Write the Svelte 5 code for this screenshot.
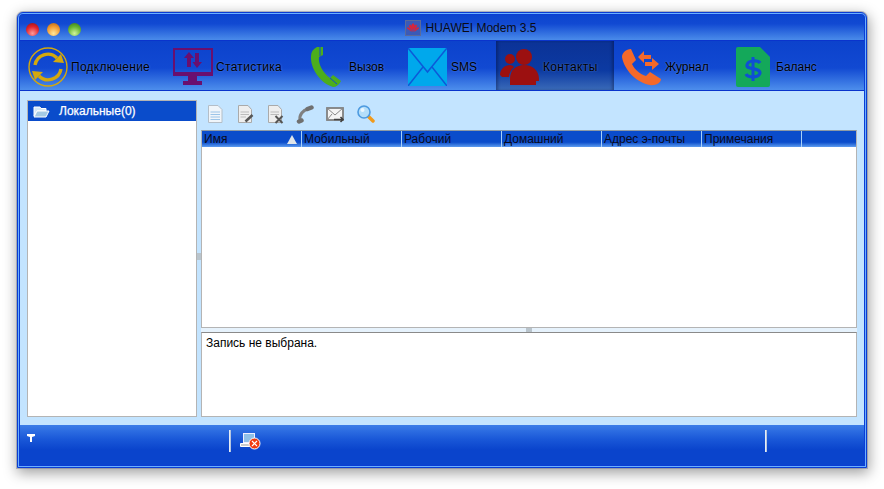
<script>
  const tools = [
    { id: 'connect', label: 'Подключение', pad: 8, width: 145, gap: 3, track: 0.27 },
    { id: 'stats', label: 'Статистика', pad: 8, width: 131, gap: 3, track: 0.3 },
    { id: 'call', label: 'Вызов', pad: 14, width: 98, gap: 7, track: 0 },
    { id: 'sms', label: 'SMS', pad: 14, width: 102, gap: 4, track: 0 },
    { id: 'contacts', label: 'Контакты', pad: 4, width: 118, gap: 3, track: 0.35, active: true },
    { id: 'log', label: 'Журнал', pad: 8, width: 114, gap: 3, track: 0 },
    { id: 'balance', label: 'Баланс', pad: 8, width: 120, gap: 6, track: 0 }
  ]
  const columns = ['Имя', 'Мобильный', 'Рабочий', 'Домашний', 'Адрес э-почты', 'Примечания']
</script>

<style>
  :global(body) { background: #fff; }
  .page { padding: 12px 17px 21px; font-family: "Liberation Sans", Arial, sans-serif; }
  .window {
    width: 850px;
    height: 456px;
    box-sizing: border-box;
    border: 1px solid #0a3cd4;
    padding: 2px;
    border-radius: 6px 6px 0 0;
    background: #c3e4ff;
    display: flex;
    flex-direction: column;
    box-shadow: inset 0 0 0 1px #6ab0ff, inset 0 0 0 2px #0a3cd4, 0 0 0 1px rgba(110, 120, 140, .45), 1px 4px 14px 1px rgba(0, 0, 0, .38);
  }
  .titlebar {
    height: 24px;
    padding: 1px 0 0 57px;
    flex: none;
    position: relative;
    display: flex;
    align-items: center;
    justify-content: center;
    background: linear-gradient(#0c45cf 0%, #1149d2 35%, #4a8bea 100%);
    border-bottom: 1px solid #0a34cc;
    font-size: 12px;
    color: #0a0a14;
    gap: 5px;
  }
  .lights { position: absolute; left: 6px; top: 8px; display: flex; gap: 8px; }
  .light { width: 13px; height: 13px; border-radius: 50%; }
  .red { background: radial-gradient(circle at 50% 80%, #ff9a9a, #e0232a 55%, #8c1016); }
  .orange { background: radial-gradient(circle at 50% 80%, #ffe89a, #f29a30 55%, #a8601a); }
  .green { background: radial-gradient(circle at 50% 80%, #d0f49a, #64b430 55%, #37701a); }
  .toolbar {
    height: 49px;
    flex: none;
    display: flex;
    background: linear-gradient(#0c42cc 0%, #1149d2 55%, #4d8eec 100%);
    border-bottom: 1px solid #0a34cc;
  }
  .tool {
    box-sizing: border-box;
    display: flex;
    align-items: center;
    flex: none;
    padding-top: 2px;
    font-size: 12px;
    color: #000;
    text-shadow: 0 0 2px rgba(180, 210, 255, .45);
  }
  .tool.active {
    background: linear-gradient(#0b3296 0%, #0c3aa2 60%, #3a6ab8 100%);
    box-shadow: inset 3px 0 3px -1px rgba(0, 0, 30, .28), inset -3px 0 3px -1px rgba(0, 0, 30, .28);
  }
  .tool svg { display: block; flex: none; }
  .content { flex: 1; min-height: 0; display: flex; padding: 9px 7px 8px 7px; }
  .tree {
    width: 170px;
    flex: none;
    box-sizing: border-box;
    background: #fff;
    border: 1px solid #b4b4b4;
  }
  .tree-row {
    height: 20px;
    background: #0a4ccb;
    color: #fff;
    font-size: 12px;
    -webkit-text-stroke: .25px #fff;
    display: flex;
    align-items: center;
    gap: 9px;
    padding-left: 5px;
  }
  .vsplit { width: 4px; flex: none; display: flex; align-items: center; }
  .grip-v { width: 4px; height: 7px; background: #b9c4cc; margin-bottom: 4px; }
  .main { flex: 1; min-width: 0; display: flex; flex-direction: column; }
  .icons { height: 30px; flex: none; display: flex; align-items: center; gap: 10px; padding: 0 0 2px 4px; box-sizing: border-box; }
  .icons svg { display: block; }
  .table {
    height: 198px;
    flex: none;
    box-sizing: border-box;
    background: #fff;
    border: 1px solid #b4b4b4;
    border-top-color: #8d9aa5;
  }
  .thead {
    height: 16px;
    display: flex;
    background: linear-gradient(#0a4ccb 0%, #0a4ccb 70%, #5d9cf0 100%);
    font-size: 12px;
    color: #0a0a20;
  }
  .th {
    width: 100px;
    box-sizing: border-box;
    padding-left: 2px;
    line-height: 16px;
    border-right: 1px solid #a8d0f8;
    position: relative;
    white-space: nowrap;
  }
  .sort {
    position: absolute;
    right: 4px;
    top: 4px;
    width: 0;
    height: 0;
    border-left: 5px solid transparent;
    border-right: 5px solid transparent;
    border-bottom: 9px solid #dfe5ea;
  }
  .hsplit { height: 4px; flex: none; display: flex; justify-content: center; background: #e6f2fc; }
  .grip-h { width: 6px; height: 4px; background: #b9c4cc; }
  .details {
    flex: 1;
    box-sizing: border-box;
    background: #fff;
    border: 1px solid #b4b4b4;
    border-top-color: #8a8a8a;
    font-size: 12px;
    color: #000;
    padding: 3px 4px;
    line-height: 15px;
  }
  .statusbar {
    height: 40px;
    flex: none;
    display: flex;
    background: linear-gradient(#3a7ce8 0%, #1a58d8 35%, #0a44cc 62%, #0a44cc 100%);
  }
  .cell { display: flex; box-sizing: border-box; align-items: flex-start; }
  .cell.signal { width: 209px; padding: 9px 0 0 7px; }
  .cell.net { width: 534px; padding: 8px 0 0 9px; }
  .sep { width: 2px; height: 22px; margin-top: 5px; background: linear-gradient(90deg, #fff, #9db4d8); flex: none; }
</style>

<div class="page">
  <div class="window">
    <div class="titlebar">
      <div class="lights">
        <span class="light red"></span><span class="light orange"></span><span class="light green"></span>
      </div>
      <svg width="16" height="16" viewBox="0 0 16 16">
        <rect x=".5" y=".5" width="15" height="15" fill="#3a5ab8" stroke="#5a6a9a"/>
        <g fill="#d8243a">
          <path d="M8 12 L6.4 5 L8 3 L9.6 5Z"/>
          <path d="M7.5 12 L3.8 6 L5 4.4 L6.8 6Z"/>
          <path d="M8.5 12 L12.2 6 L11 4.4 L9.2 6Z"/>
          <path d="M7 12 L2 8.6 L2.6 7 L5 8.4Z"/>
          <path d="M9 12 L14 8.6 L13.4 7 L11 8.4Z"/>
        </g>
      </svg>
      <span>HUAWEI Modem 3.5</span>
    </div>

    <div class="toolbar">
      {#each tools as t (t.id)}
        <div class="tool" class:active={t.active} style={`width:${t.width}px;padding-left:${t.pad}px;gap:${t.gap}px;letter-spacing:${t.track}px`}>
          {#if t.id === 'connect'}
            <svg width="40" height="40" viewBox="0 0 40 40">
              <circle cx="20" cy="20" r="19" fill="none" stroke="#d4a80c" stroke-width="1.4"/>
              <path d="M7 18 A13 13 0 0 1 29 11" fill="none" stroke="#d4a80c" stroke-width="3.4"/>
              <path d="M25 15 L36 16 L33 7Z" fill="#d4a80c"/>
              <path d="M33 22 A13 13 0 0 1 11 29" fill="none" stroke="#d4a80c" stroke-width="3.4"/>
              <path d="M15 25 L4 24 L7 33Z" fill="#d4a80c"/>
            </svg>
          {:else if t.id === 'stats'}
            <svg width="40" height="38" viewBox="0 0 40 38">
              <path fill="#6a0f6e" fill-rule="evenodd" d="M0 0H40V28H24V33H29V37H10V33H15V28H0ZM2 2V24H38V2Z"/>
              <path fill="#6a0f6e" d="M14 19V10H11L16 4L21 10H18V19Z M22 5H26V14H29L24 20L19.500 14H22Z"/>
            </svg>
          {:else if t.id === 'call'}
            <svg width="32" height="40" viewBox="0 0 32 40">
              <path fill="#4cae1c" d="M7 0 L13 0 L13 8 L9 10 C8 17 13 26 20 31 L23 28 L31 34 C29 38 26 40 23 40 C10 36 0 21 1 9 C1 5 3 2 7 0Z"/>
              <path stroke="#1149d2" stroke-width="1" d="M10 0V9 M20 31L27 37" fill="none"/>
            </svg>
          {:else if t.id === 'sms'}
            <svg width="39" height="38" viewBox="0 0 39 38">
              <rect width="39" height="38" fill="#00a8ec"/>
              <path d="M0 0L19.500 24L39 0M0 38L15 19M39 38L24 19" fill="none" stroke="#0c5ad8" stroke-width="1.500"/>
            </svg>
          {:else if t.id === 'contacts'}
            <svg width="40" height="38" viewBox="0 0 40 38">
              <g fill="#9c1010">
                <circle cx="10" cy="11" r="5"/>
                <path d="M0 27C0 21 5 17 10 17C12 17 13 18 14 19C11 22 9 25 9 29H2Z"/>
                <circle cx="24" cy="9" r="8"/>
                <path d="M10 37V31C10 22 16 17 24 17C33 17 39 23 39 31V33H36V37Z"/>
              </g>
            </svg>
          {:else if t.id === 'log'}
            <svg width="40" height="38" viewBox="0 0 40 38">
              <path fill="#f4692a" d="M9 1L14 12L10 16C13 22 18 26 24 28L28 24L39 31C39 35 33 38 28 37C15 35 2 22 0 9C0 5 4 1 9 1Z"/>
              <path fill="#f4692a" d="M16 9L22 3V7H29V11H22V15Z M23 14H30V10L37 16L30 22V18H23Z"/>
            </svg>
          {:else}
            <svg width="34" height="40" viewBox="0 0 34 40">
              <path fill="#14a85a" d="M2 0H24L34 10V38Q34 40 32 40H2Q0 40 0 38V2Q0 0 2 0Z"/>
              <path fill="none" stroke="#0f4fd4" stroke-width="3.200" d="M24 16C22 13 12 13 11 18C10 23 24 20 24 26C23 31 12 31 10 27"/>
              <path stroke="#0f4fd4" stroke-width="3" d="M17 10V34"/>
            </svg>
          {/if}
          <span>{t.label}</span>
        </div>
      {/each}
    </div>

    <div class="content">
      <div class="tree">
        <div class="tree-row">
          <svg width="17" height="13" viewBox="0 0 17 13">
            <path fill="#d6e8f6" stroke="#fff" d="M1 11V2H7L8 3.500H13V6H4Z"/>
            <path fill="#a4cae4" stroke="#fff" d="M1 12L4 6H16L13 12Z"/>
          </svg>
          <span>Локальные(0)</span>
        </div>
      </div>
      <div class="vsplit"><div class="grip-v"></div></div>
      <div class="main">
        <div class="icons">
          <svg width="20" height="20" viewBox="0 0 20 20">
            <path fill="#f0f5fa" stroke="#b4bec8" d="M3.500 1.500H13L17 5.500V18.500H3.500Z"/>
            <path stroke="#9cc4e8" d="M5.500 8H15M5.500 10.500H15M5.500 13H15M5.500 15.500H15"/>
          </svg>
          <svg width="20" height="20" viewBox="0 0 20 20">
            <path fill="#eeeeee" stroke="#aaa" d="M3.500 1.500H13L16.500 5.500V18.500H3.500Z"/>
            <path stroke="#bbb" d="M5.500 8H14M5.500 10.500H14M5.500 13H11"/>
            <path stroke="#555" stroke-width="2.500" d="M10.500 17.500L17.500 11"/>
          </svg>
          <svg width="20" height="20" viewBox="0 0 20 20">
            <path fill="#eeeeee" stroke="#aaa" d="M3.500 1.500H13L16.500 5.500V18.500H3.500Z"/>
            <path stroke="#bbb" d="M5.500 8H14M5.500 10.500H14"/>
            <path stroke="#555" stroke-width="2" d="M10.500 12L17.500 19M17.500 12L10.500 19"/>
          </svg>
          <svg width="20" height="20" viewBox="0 0 20 20">
            <path fill="none" stroke="#808080" stroke-width="3" d="M5 16C4 11 8 6 13 5"/>
            <path stroke="#707070" stroke-width="4.500" stroke-linecap="round" d="M4 17.500L6.500 16.500M12.500 5L16.500 3.500"/>
          </svg>
          <svg width="20" height="20" viewBox="0 0 20 20">
            <rect x="2" y="4" width="16" height="12" fill="#f4f4f4" stroke="#808080" stroke-width="1.800"/>
            <path fill="none" stroke="#888" d="M2 4L10 11L18 4M2 16L7 10"/>
            <path stroke="#404040" stroke-width="1.500" d="M9 15.500H18M15.500 13L18 15.500L15.500 18" fill="none"/>
          </svg>
          <svg width="20" height="20" viewBox="0 0 20 20">
            <path stroke="#f09a1c" stroke-width="3.500" stroke-linecap="round" d="M13 12L18 17"/>
            <circle cx="9" cy="8" r="6" fill="#b4defa" stroke="#4d9ae0" stroke-width="1.600"/>
            <circle cx="7.500" cy="6" r="2" fill="#eaf6ff"/>
          </svg>
        </div>
        <div class="table">
          <div class="thead">
            {#each columns as c, i (c)}
              <div class="th">{c}{#if i === 0}<span class="sort"></span>{/if}</div>
            {/each}
          </div>
        </div>
        <div class="hsplit"><div class="grip-h"></div></div>
        <div class="details">Запись не выбрана.</div>
      </div>
    </div>

    <div class="statusbar">
      <div class="cell signal">
        <svg width="8" height="8" viewBox="0 0 8 8"><path fill="#fff" d="M0 0H8V2L5 3V8H3V3L0 2Z"/></svg>
      </div>
      <div class="sep"></div>
      <div class="cell net">
        <svg width="21" height="17" viewBox="0 0 21 17">
          <rect x="3.500" y=".5" width="11" height="9" fill="#8fc0e8" stroke="#eef" />
          <path fill="#ccc" stroke="#fff" d="M.5 10.500H13V13.500H.5Z"/>
          <circle cx="14.500" cy="10.500" r="5.500" fill="#f03a10" stroke="#fff"/>
          <path stroke="#fff" stroke-width="1.200" d="M12 8L17 13M17 8L12 13"/>
        </svg>
      </div>
      <div class="sep"></div>
    </div>
  </div>
</div>
